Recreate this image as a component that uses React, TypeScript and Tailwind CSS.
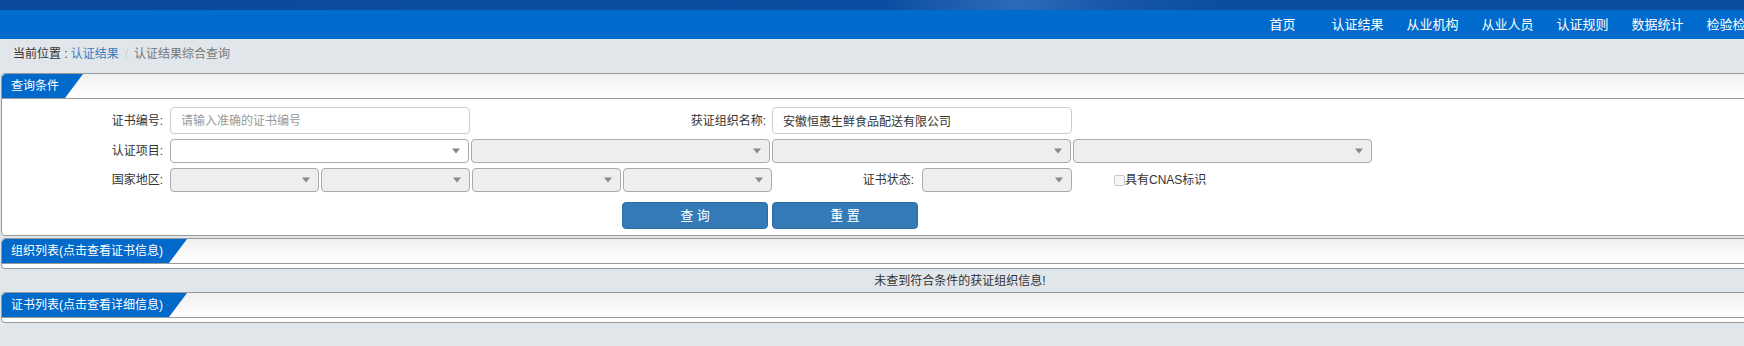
import clsx from 'clsx'

const NAV_ITEMS = ['首页', '认证结果', '从业机构', '从业人员', '认证规则', '数据统计', '检验检测', '信息公开', '下载中心']

const Select: React.FC<{ width: string; disabled?: boolean }> = ({ width, disabled }) => (
  <div
    className={clsx(
      'relative h-[24px] shrink-0 rounded-[4px] border border-[#aaa]',
      width,
      disabled ? 'bg-[#eee]' : 'bg-white'
    )}
  >
    <span className="absolute top-1/2 right-[8px] h-0 w-0 -translate-y-1/2 border-x-[4px] border-t-[5px] border-x-transparent border-t-[#888]" />
  </div>
)

const Label: React.FC<{ width: string; children: React.ReactNode }> = ({ width, children }) => (
  <label className={clsx('shrink-0 text-right text-[12px] text-[#333]', width)}>{children}</label>
)

const PanelHeader: React.FC<{ title: string }> = ({ title }) => (
  <div className="flex h-[25px] border-b border-[#999] bg-linear-to-b from-[#f0f0f0] to-white">
    <div className="flex h-[24px] items-center rounded-tl-[4px] bg-[#0069c9] pr-[24px] pl-[9px] text-[12px] text-white [clip-path:polygon(0_0,100%_0,calc(100%-18px)_100%,0_100%)]">
      {title}
    </div>
  </div>
)

export default function App() {
  return (
    <div className="h-[346px] w-[1744px] overflow-hidden bg-[#e1e6ea] [font-family:'Liberation_Sans','Noto_Sans_CJK_SC',sans-serif]">
      <div className="w-[1920px]">
        {/* top banner + nav */}
        <div className="h-[10px] bg-[linear-gradient(90deg,#0a4a9b_0%,#0b4ea1_46%,#2d6bb8_53%,#1657a8_58%,#0a4c9e_64%,#0a4c9e_100%)]" />
        <nav className="flex h-[29px] justify-end bg-[#006bcc]">
          {NAV_ITEMS.map((item) => (
            <a key={item} className="w-[75px] text-center text-[13px] leading-[29px] text-white">
              {item}
            </a>
          ))}
        </nav>

        {/* breadcrumb */}
        <div className="flex h-[34px] items-center pb-[4px] pl-[13px] text-[12px]">
          <span className="text-[#333]">当前位置 :</span>
          <span className="ml-[3px] text-[#3a7cc0]">认证结果</span>
          <span className="px-[6px] text-[#ccc]">/</span>
          <span className="text-[#777]">认证结果综合查询</span>
        </div>

        {/* query panel */}
        <section className="ml-px overflow-hidden rounded-[4px] border border-[#999] bg-white">
          <PanelHeader title="查询条件" />
          <div className="flex flex-col pt-[8px] pb-[6px]">
            <div className="flex h-[27px] items-center">
              <Label width="w-[168px] pr-[7px]">证书编号:</Label>
              <input
                className="h-[27px] w-[300px] rounded-[4px] border border-[#ccc] px-[10px] text-[12px] text-[#333] outline-none placeholder:text-[#999]"
                placeholder="请输入准确的证书编号"
              />
              <Label width="w-[302px] pr-[6px]">获证组织名称:</Label>
              <input
                className="h-[27px] w-[300px] rounded-[4px] border border-[#ccc] px-[10px] text-[12px] text-[#333] outline-none"
                defaultValue="安徽恒惠生鲜食品配送有限公司"
              />
            </div>
            <div className="mt-[5px] flex items-center gap-[2px]">
              <Label width="w-[166px] pr-[5px]">认证项目:</Label>
              <Select width="w-[299px]" />
              <Select width="w-[299px]" disabled />
              <Select width="w-[299px]" disabled />
              <Select width="w-[299px]" disabled />
            </div>
            <div className="mt-[5px] flex items-center">
              <Label width="w-[168px] pr-[7px]">国家地区:</Label>
              <div className="flex gap-[2px]">
                <Select width="w-[149px]" disabled />
                <Select width="w-[149px]" disabled />
                <Select width="w-[149px]" disabled />
                <Select width="w-[149px]" disabled />
              </div>
              <Label width="w-[150px] pr-[8px]">证书状态:</Label>
              <Select width="w-[150px]" disabled />
              <span className="ml-[42px] h-[11px] w-[11px] rounded-[2px] border border-[#c8c8c8] bg-[#f7f7f7]" />
              <span className="text-[12px] text-[#333]">具有CNAS标识</span>
            </div>
            <div className="mt-[10px] flex gap-[4px] pl-[620px]">
              <button className="h-[27px] w-[146px] rounded-[4px] border border-[#2e6da4] bg-[#337ab7] text-[13px] text-white">
                查 询
              </button>
              <button className="h-[27px] w-[146px] rounded-[4px] border border-[#2e6da4] bg-[#337ab7] text-[13px] text-white">
                重 置
              </button>
            </div>
          </div>
        </section>

        {/* organisation list */}
        <section className="mt-[2px] ml-px overflow-hidden rounded-[4px] border border-[#999] bg-white">
          <PanelHeader title="组织列表(点击查看证书信息)" />
          <div className="h-[4px]" />
        </section>
        <div className="flex h-[23px] items-center justify-center text-[12px] text-[#333]">
          未查到符合条件的获证组织信息!
        </div>

        {/* certificate list */}
        <section className="ml-px overflow-hidden rounded-[4px] border border-[#999] bg-white">
          <PanelHeader title="证书列表(点击查看详细信息)" />
          <div className="h-[4px]" />
        </section>
      </div>
    </div>
  )
}
